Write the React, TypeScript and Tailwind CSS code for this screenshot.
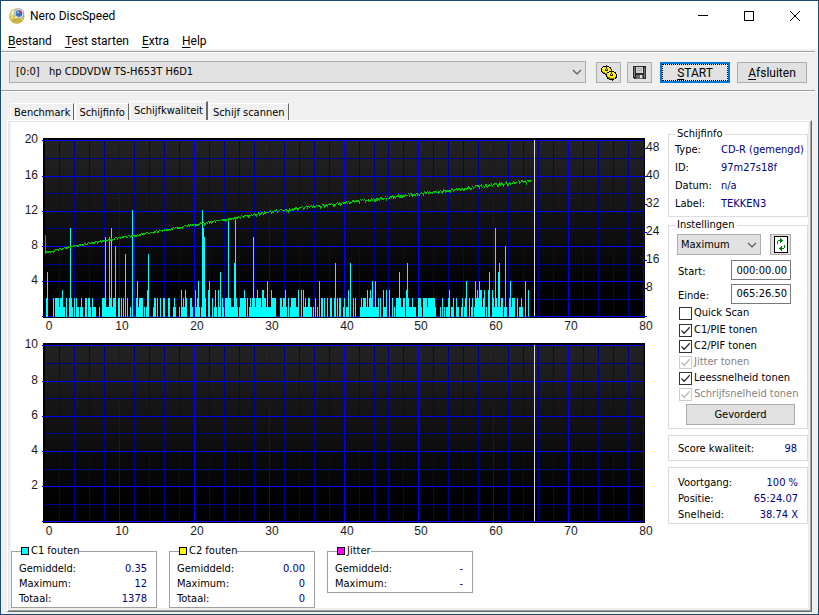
import { useState } from "react";
import type { ReactNode } from "react";

const PLOT_ROWS = [7, 25, 43, 60, 78, 95, 113, 131, 148, 166, 183];
const PLOT_COLS = Array.from({ length: 41 }, (_, i) => Math.round(33.4 + i * 14.96));

// Runs of C1 errors: start column, then one hex digit per column
const C1_RUNS: [number, string][] = [
  [46, "25"], [53, "2"], [55, "2222122311"], [66, "2"], [69, "2a21"], [74, "2"], [76, "211"],
  [80, "121"], [85, "22"], [88, "221"], [92, "2111"], [99, "1"], [102, "222911192a1228"],
  [118, "22"], [121, "2"], [123, "2"], [125, "7"], [127, "2"], [130, "1"], [132, "c"],
  [136, "2412222"], [144, "1"], [146, "137"], [153, "122"], [157, "2"], [160, "2"], [163, "22"],
  [168, "22"], [173, "121"], [179, "1"], [181, "312132"], [190, "221"], [195, "31241"],
  [201, "1ca92"], [208, "34"], [212, "2"], [214, "131"], [218, "31"], [220, "5"], [222, "21"],
  [225, "222b221116b21"], [239, "1222232"], [247, "2"], [249, "121"], [252, "2921"],
  [256, "232221"], [262, "33221411"], [270, "132222"], [280, "2212231"], [288, "2"],
  [290, "122222113"], [301, "3"], [303, "312112211"], [313, "1"], [315, "2"], [317, "1"],
  [319, "4"], [321, "22"], [324, "2"], [327, "2"], [330, "22"], [334, "26"], [337, "2"],
  [339, "22"], [343, "12"], [346, "113"], [350, "6"], [353, "2"], [355, "2"],
  [360, "1212221312324114112"], [380, "2"], [383, "31"], [385, "13"], [389, "3"], [392, "2"],
  [394, "1"], [396, "222521122"], [406, "3621112111"], [418, "2221"], [423, "222212222"],
  [432, "2221"], [440, "1"], [442, "2"], [444, "1"], [446, "1123"], [451, "112"],
  [456, "211"], [461, "12"], [464, "124"], [469, "2"], [471, "12"], [474, "1423243"],
  [481, "3123"], [486, "1"], [488, "35"], [492, "321a215612"], [502, "2"], [504, "181"],
  [509, "241222"], [517, "2"], [519, "1121"], [525, "4"], [528, "3"],
];

const SPEED_KNOTS: [number, number][] = [
  [45, 119], [70, 113], [115, 105], [200, 90], [270, 78], [344, 69], [418, 60], [493, 51], [532, 47],
];

function barsPath() {
  let d = "";
  for (const [start, run] of C1_RUNS) {
    run.split("").forEach((ch, i) => {
      const top = Math.round(183 - parseInt(ch, 16) * 8.8);
      d += `M${start + i - 11} ${top}h1V184h-1z`;
    });
  }
  return d;
}

function speedPath() {
  let d = "M34 102h1v17h-1z";
  let seed = 7;
  const rand = () => {
    seed = (seed * 16807) % 2147483647;
    return seed / 2147483647;
  };
  for (let x = 45; x <= 531; x++) {
    const k = Math.max(1, SPEED_KNOTS.findIndex(([kx]) => kx >= x));
    const [x0, y0] = SPEED_KNOTS[k - 1];
    const [x1, y1] = SPEED_KNOTS[k];
    const y = y0 + ((x - x0) / (x1 - x0)) * (y1 - y0);
    // jitter grows towards the outer edge of the disc
    const spread = 1 + (x - 45) / 300;
    const top = Math.round(y + (rand() - 0.5) * spread);
    const h = 1 + (rand() > 0.5 ? 1 : 0) + (rand() * spread > 1.3 ? 1 : 0);
    d += `M${x - 11} ${top}h1v${h}h-1z`;
  }
  return d;
}

const BARS = barsPath();
const SPEED = speedPath();

function Plot({ id, max, label, quality = false }: { id: string; max: number; label: string; quality?: boolean }) {
  return (
    <svg viewBox="0 0 652 205" className="block w-full" role="img" aria-label={label}>
      <defs>
        <linearGradient id={id} x1="0" y1="0" x2="0" y2="1">
          <stop offset="0" stopColor="#232323" />
          <stop offset="0.9" stopColor="#000" />
        </linearGradient>
      </defs>
      <g shapeRendering="crispEdges">
        <rect x="32" y="5" width="602" height="180" fill="#000" />
        <rect x="34" y="7" width="599" height="177" fill={`url(#${id})`} />
        {PLOT_COLS.slice(1).map((x, i) => (
          <rect key={x} x={x} y="7" width="1" height="178" fill={(i + 1) % 5 === 0 ? "#0000f0" : "#000090"} />
        ))}
        {PLOT_ROWS.map((y, i) => (
          <rect
            key={y}
            x={i % 2 ? 33 : 31}
            y={y}
            width={i % 2 ? 600 : 602}
            height="1"
            fill={i % 2 ? "#000090" : "#0000f8"}
          />
        ))}
        {quality && <path d={BARS} fill="#00ffff" />}
        {quality && <path d={SPEED} fill="#00c800" />}
        <rect x="523" y="7" width="1" height="176" fill="#dcdcdc" />
        {quality &&
          Array.from({ length: 31 }, (_, i) => (
            <rect
              key={i}
              x="632"
              y={Math.round(183 - i * 5.6)}
              width={i % 5 === 0 ? 4 : 2}
              height="1"
              fill="#0000d0"
            />
          ))}
      </g>
      <g className="fill-[#1a1a1a] font-['Liberation_Sans',sans-serif] text-[12px]">
        {[0, 1, 2, 3, 4].map((i) => (
          <text key={i} x="27" y={PLOT_ROWS[i * 2] + 3} textAnchor="end">
            {max - (max / 5) * i}
          </text>
        ))}
        {PLOT_COLS.filter((_, i) => i % 5 === 0).map((x, i) => (
          <text key={x} x={i === 0 ? x + 5 : x + 3} y="197" textAnchor="middle">
            {i * 10}
          </text>
        ))}
        {quality &&
          [48, 40, 32, 24, 16, 8].map((v, i) => (
            <text key={v} x="635" y={18 + i * 28} textAnchor="start">
              {v}
            </text>
          ))}
      </g>
    </svg>
  );
}

function StatBox({ title, swatch, rows }: { title: string; swatch: string; rows: [string, string][] }) {
  return (
    <fieldset className="w-[146px] self-start border border-[#a0a0a0] pr-[9px] pb-px pl-[7px]">
      <legend className="ml-[2px] flex h-4 items-center gap-[2px] leading-4">
        <span className={`size-2 border border-black ${swatch}`} />
        {title}
      </legend>
      <dl className="pt-[2px] leading-[15px]">
        {rows.map(([name, value]) => (
          <div key={name} className="flex justify-between">
            <dt>{name}</dt>
            <dd className="text-[#000080]">{value}</dd>
          </div>
        ))}
      </dl>
    </fieldset>
  );
}

function Check({ label, defaultChecked, disabled }: { label: string; defaultChecked?: boolean; disabled?: boolean }) {
  return (
    <label className={`flex h-4 items-center gap-[2px] whitespace-nowrap ${disabled ? "text-[#838383]" : ""}`}>
      <span className="relative size-[13px] shrink-0">
        <input
          type="checkbox"
          defaultChecked={defaultChecked}
          disabled={disabled}
          className="peer block size-[13px] appearance-none border border-[#333] bg-white disabled:border-[#ccc]"
        />
        <svg
          viewBox="0 0 13 13"
          className="pointer-events-none absolute inset-0 hidden peer-checked:block"
          fill="none"
          stroke={disabled ? "#bbb" : "#333"}
          strokeWidth="1.3"
        >
          <path d="M2.5 6.5l2.7 2.8 5.5-6" />
        </svg>
      </span>
      {label}
    </label>
  );
}

function Chevron() {
  return (
    <svg
      viewBox="0 0 10 6"
      className="pointer-events-none absolute top-1/2 right-1 h-[6px] w-[10px] -translate-y-1/2"
      fill="none"
      stroke="#555"
      strokeWidth="1.2"
    >
      <path d="M1 1l4 4 4-4" />
    </svg>
  );
}

function PushButton({ children, className = "", label }: { children: ReactNode; className?: string; label?: string }) {
  return (
    <button
      type="button"
      aria-label={label}
      className={`flex h-[21px] items-center justify-center border border-[#adadad] bg-[#e1e1e1] ${className}`}
    >
      {children}
    </button>
  );
}

function AppIcon() {
  return (
    <svg viewBox="0 0 16 16" className="size-4">
      <circle cx="7.8" cy="8.2" r="7.6" fill="#b9a24a" />
      <circle cx="7.8" cy="8" r="6.8" fill="#e6d36a" />
      <path d="M1.5 6A7 7 0 0 1 6 1.5L8 8z" fill="#f8f2c8" />
      <path d="M2 12a7 7 0 0 0 11 0L8 9z" fill="#cdb43c" />
      <circle cx="10" cy="5.6" r="4.8" fill="#dfe7ee" stroke="#8b98a8" strokeWidth="0.8" />
      <circle cx="10" cy="5.6" r="3.3" fill="#2f6fc4" />
      <path d="M10 5.6l1-3.2a3.3 3.3 0 0 1 2.2 3z" fill="#d4423a" />
      <path d="M7.4 5l2-2 .5 2.4z" fill="#9cc8f5" />
      <circle cx="7" cy="9.4" r="1.6" fill="#fffbe0" stroke="#a28b2c" strokeWidth="0.6" />
    </svg>
  );
}

function DiscsIcon() {
  return (
    <svg viewBox="0 0 16 16" className="size-4" shapeRendering="crispEdges">
      {/* back disc */}
      <path d="M2 1h6v1h2v2h1v4h-1v1H8v1H4V9H2V8H1V7H0V3h1V2h1z" fill="#000" />
      <path d="M2 2h6v1h1v1h1v3H9v1H4V7H2V6H1V3h1z" fill="#ffee00" />
      <path d="M1 6h1v1h2v1h4v1H4V8H2V7H1z" fill="#807600" />
      <path d="M2 3h1v1H2zM3 4h1v1H3zM7 6h1v1H7z" fill="#fff" />
      <path d="M5 0h1v4H5zM4 4h3v2H4z" fill="#333" />
      <path d="M5 4h1v1H5z" fill="#e1e1e1" />
      {/* front disc */}
      <path d="M8 6h5v1h2v2h1v4h-1v1h-2v1h-1v1h-1v-1H8v-1H6v-2H5V9h1V7h2z" fill="#000" />
      <path d="M8 7h5v1h1v1h1v3h-1v1H9v-1H7v-1H6V8h2z" fill="#ffee00" />
      <path d="M6 11h1v1h2v1h5v1H8v-1H7v-1H6z" fill="#807600" />
      <path d="M7 8h1v1H7zM8 9h1v1H8zM12 11h1v1h-1z" fill="#fff" />
      <path d="M10 5h1v4h-1zM9 9h3v2H9z" fill="#333" />
      <path d="M10 9h1v1h-1z" fill="#e1e1e1" />
    </svg>
  );
}

function SaveIcon() {
  return (
    <svg viewBox="0 0 13 13" className="size-[13px]" shapeRendering="crispEdges">
      <path d="M0 0h13v13H1v-1H0z" fill="#2b2b2b" />
      <path d="M1 1h1v10H1zM11 2h1v10h-1z" fill="#777" />
      <path d="M3 1h7v6H3z" fill="#d4d4d4" />
      <path d="M4 2h5v1H4zM4 4h5v1H4z" fill="#aaa" />
      <path d="M3 9h7v4H3z" fill="#6b6b6b" />
      <path d="M7 9h2v3H7z" fill="#e4e4e4" />
    </svg>
  );
}

function RefreshIcon() {
  return (
    <svg viewBox="0 0 14 17" className="h-[17px] w-[14px]" shapeRendering="crispEdges">
      <path d="M0 0h14v17H0z" fill="#000" />
      <path d="M1 1h12v15H1z" fill="#fff" />
      <path d="M3 5h1v3H3zM4 4h3v1H4zM6 2h1v5H6zM7 3h1v3H7zM8 4h1v1H8z" fill="#008000" />
      <path d="M10 9h1v3h-1zM7 12h3v1H7zM7 10h1v5H7zM6 11h1v3H6zM5 12h1v1H5z" fill="#008000" />
    </svg>
  );
}

const DISC_INFO: [string, string][] = [
  ["Type:", "CD-R (gemengd)"],
  ["ID:", "97m27s18f"],
  ["Datum:", "n/a"],
  ["Label:", "TEKKEN3"],
];

const PROGRESS: [string, string][] = [
  ["Voortgang:", "100 %"],
  ["Positie:", "65:24.07"],
  ["Snelheid:", "38.74 X"],
];

const MENU = ["Bestand", "Test starten", "Extra", "Help"];
const TABS = ["Benchmark", "Schijfinfo", "Schijfkwaliteit", "Schijf scannen"];

export default function App() {
  const [tab, setTab] = useState("Schijfkwaliteit");
  const [start, setStart] = useState("000:00.00");
  const [end, setEnd] = useState("065:26.50");

  return (
    <div className="flex min-h-screen flex-col border border-[#1c4e73] bg-[#f0f0f0] font-['DejaVu_Sans_Condensed','DejaVu_Sans',sans-serif] text-[11px] text-black">
      {/* Title bar */}
      <header className="bg-white font-['Roboto',sans-serif] text-[12px]">
        <div className="flex h-[30px] items-center pl-2">
          <AppIcon />
          <h1 className="ml-[5px] flex-1">Nero DiscSpeed</h1>
          <button type="button" aria-label="Minimaliseren" className="flex h-full w-[46px] items-center justify-center">
            <svg viewBox="0 0 10 10" className="size-[10px]" stroke="#000" shapeRendering="crispEdges">
              <path d="M0 4.5h10" />
            </svg>
          </button>
          <button type="button" aria-label="Maximaliseren" className="flex h-full w-[46px] items-center justify-center">
            <svg viewBox="0 0 10 10" className="size-[10px]" stroke="#000" fill="none" shapeRendering="crispEdges">
              <path d="M.5.5h9v9h-9z" />
            </svg>
          </button>
          <button type="button" aria-label="Sluiten" className="flex h-full w-[46px] items-center justify-center">
            <svg viewBox="0 0 10 10" className="size-[10px]" stroke="#000">
              <path d="M0 0l10 10M10 0L0 10" />
            </svg>
          </button>
        </div>
        <nav className="flex h-[18px] items-center gap-[13px] pt-[2px] pl-[7px]">
          {MENU.map((item) => (
            <button key={item} type="button">
              <span className="underline underline-offset-2">{item[0]}</span>
              {item.slice(1)}
            </button>
          ))}
        </nav>
      </header>

      {/* Toolbar */}
      <div className="mt-[2px] mr-[3px] border-y border-[#a0a0a0]">
        <div className="flex items-end border-t border-white pt-[8px] pr-2 pb-[7px] pl-2">
          <div className="relative flex-1">
            <select
              aria-label="Station"
              className="block h-[22px] w-full appearance-none border border-[#adadad] bg-[#e1e1e1] pt-px pl-[6px] whitespace-pre"
            >
              <option>{"[0:0]\u00a0\u00a0 hp CDDVDW TS-H653T H6D1"}</option>
            </select>
            <Chevron />
          </div>
          <PushButton label="Schijf" className="ml-[10px] w-[25px]">
            <DiscsIcon />
          </PushButton>
          <PushButton label="Opslaan" className="ml-[6px] w-[25px]">
            <SaveIcon />
          </PushButton>
          <button
            type="button"
            className="ml-2 h-[21px] w-[70px] border-2 border-[#0078d7] bg-[#e1e1e1] font-['Roboto',sans-serif] text-[12px]"
          >
            <span className="flex h-full items-center justify-center border border-dotted border-black">
              <span className="underline underline-offset-2">S</span>TART
            </span>
          </button>
          <PushButton className="ml-[7px] w-[70px] font-['Roboto',sans-serif] text-[12px]">
            <span className="underline underline-offset-2">A</span>fsluiten
          </PushButton>
        </div>
      </div>

      {/* Tabs */}
      <div role="tablist" className="flex h-[29px] items-end gap-px border-t border-white pl-[9px]">
        {TABS.map((name) => (
          <button
            key={name}
            type="button"
            role="tab"
            aria-selected={tab === name}
            onClick={() => setTab(name)}
            className="h-[17px] border-t border-r border-l border-t-white border-r-[#696969] border-l-white px-[3px] pt-[2px] leading-[14px] whitespace-nowrap aria-selected:h-[19px] aria-selected:border-r-2 aria-selected:pb-[2px]"
          >
            {name}
          </button>
        ))}
      </div>

      <main className="mr-[6px] mb-[2px] ml-[6px] flex-1 border border-t-white border-r-[#696969] border-b-[#696969] border-l-white">
        <div className="h-full border border-t-[#e3e3e3] border-r-[#a0a0a0] border-b-[#a0a0a0] border-l-[#e3e3e3] px-[2px] pb-[2px]">
          <div className="flex h-full gap-[5px] bg-white pt-[5px]">
            <section className="min-w-0 flex-1 pt-[6px]">
              <Plot id="c1-bg" max={20} label="C1 fouten en leessnelheid" quality />
              <Plot id="c2-bg" max={10} label="C2 fouten" />
              <div className="flex gap-3">
                <StatBox
                  title="C1 fouten"
                  swatch="bg-[#00ffff]"
                  rows={[["Gemiddeld:", "0.35"], ["Maximum:", "12"], ["Totaal:", "1378"]]}
                />
                <StatBox
                  title="C2 fouten"
                  swatch="bg-[#ffff00]"
                  rows={[["Gemiddeld:", "0.00"], ["Maximum:", "0"], ["Totaal:", "0"]]}
                />
                <StatBox
                  title="Jitter"
                  swatch="bg-[#ff00ff]"
                  rows={[["Gemiddeld:", "-"], ["Maximum:", "-"]]}
                />
              </div>
            </section>

            <aside className="w-[140px] shrink-0">
              <fieldset className="min-w-0 border border-[#dcdcdc] pb-[3px] pl-[6px]">
                <legend className="h-[14px] px-[2px] leading-[14px]">Schijfinfo</legend>
                <dl className="leading-[18px]">
                  {DISC_INFO.map(([name, value]) => (
                    <div key={name} className="flex whitespace-nowrap">
                      <dt className="w-[46px] shrink-0">{name}</dt>
                      <dd className="text-[#000080]">{value}</dd>
                    </div>
                  ))}
                </dl>
              </fieldset>

              <fieldset className="mt-px min-w-0 border border-[#dcdcdc] pr-4 pb-[3px] pl-2">
                <legend className="-ml-[2px] h-[14px] px-[2px] leading-[14px]">Instellingen</legend>
                <div className="flex justify-between pt-[2px]">
                  <div className="relative w-[84px]">
                    <select
                      aria-label="Snelheid"
                      className="block h-[21px] w-full appearance-none border border-[#adadad] bg-[#e1e1e1] pt-px pl-[3px]"
                    >
                      <option>Maximum</option>
                    </select>
                    <Chevron />
                  </div>
                  <PushButton label="Vernieuwen" className="w-[21px]">
                    <RefreshIcon />
                  </PushButton>
                </div>
                <label className="mt-[5px] flex items-center justify-between pl-px">
                  <span className="pt-1">Start:</span>
                  <input
                    value={start}
                    onChange={(e) => setStart(e.target.value)}
                    className="h-5 w-[60px] border border-[#7a7a7a] bg-white pr-[3px] text-right"
                  />
                </label>
                <label className="mt-[3px] flex items-center justify-between pl-px">
                  <span className="pt-1">Einde:</span>
                  <input
                    value={end}
                    onChange={(e) => setEnd(e.target.value)}
                    className="h-5 w-[60px] border border-[#7a7a7a] bg-white pr-[3px] text-right"
                  />
                </label>
                <div className="mt-px mb-[2px] ml-[2px]">
                  <div className="mb-px">
                    <Check label="Quick Scan" />
                  </div>
                  <Check label="C1/PIE tonen" defaultChecked />
                  <Check label="C2/PIF tonen" defaultChecked />
                  <Check label="Jitter tonen" defaultChecked disabled />
                  <Check label="Leessnelheid tonen" defaultChecked />
                  <Check label="Schrijfsnelheid tonen" defaultChecked disabled />
                </div>
                <PushButton className="ml-[9px] w-[109px] pt-[2px]">Gevorderd</PushButton>
              </fieldset>

              <div className="mt-[6px] flex h-[26px] items-center justify-between border border-[#dcdcdc] pt-[2px] pr-[10px] pl-[9px]">
                <span>Score kwaliteit:</span>
                <span className="text-[#000080]">98</span>
              </div>

              <dl className="mt-[6px] border border-[#dcdcdc] pt-[7px] pr-[9px] pl-[9px] leading-4">
                {PROGRESS.map(([name, value]) => (
                  <div key={name} className="flex justify-between">
                    <dt>{name}</dt>
                    <dd className="text-[#000080]">{value}</dd>
                  </div>
                ))}
              </dl>
            </aside>
          </div>
        </div>
      </main>
    </div>
  );
}
